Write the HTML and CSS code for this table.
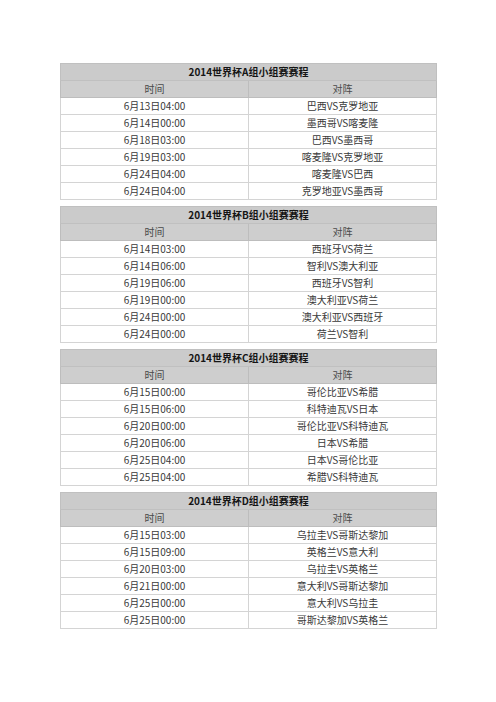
FILE: index.html
```html
<!DOCTYPE html>
<html lang="zh-CN">
<head>
<meta charset="utf-8">
<title>2014世界杯小组赛赛程</title>
<link rel="stylesheet" href="styles.css">
</head>
<body>
<div class="page">
  <table class="sched">
    <tr class="title"><td colspan="2">2014世界杯A组小组赛赛程</td></tr>
    <tr class="head"><td>时间</td><td>对阵</td></tr>
    <tr><td>6月13日04:00</td><td>巴西VS克罗地亚</td></tr>
    <tr><td>6月14日00:00</td><td>墨西哥VS喀麦隆</td></tr>
    <tr><td>6月18日03:00</td><td>巴西VS墨西哥</td></tr>
    <tr><td>6月19日03:00</td><td>喀麦隆VS克罗地亚</td></tr>
    <tr><td>6月24日04:00</td><td>喀麦隆VS巴西</td></tr>
    <tr><td>6月24日04:00</td><td>克罗地亚VS墨西哥</td></tr>
  </table>
  <table class="sched">
    <tr class="title"><td colspan="2">2014世界杯B组小组赛赛程</td></tr>
    <tr class="head"><td>时间</td><td>对阵</td></tr>
    <tr><td>6月14日03:00</td><td>西班牙VS荷兰</td></tr>
    <tr><td>6月14日06:00</td><td>智利VS澳大利亚</td></tr>
    <tr><td>6月19日06:00</td><td>西班牙VS智利</td></tr>
    <tr><td>6月19日00:00</td><td>澳大利亚VS荷兰</td></tr>
    <tr><td>6月24日00:00</td><td>澳大利亚VS西班牙</td></tr>
    <tr><td>6月24日00:00</td><td>荷兰VS智利</td></tr>
  </table>
  <table class="sched">
    <tr class="title"><td colspan="2">2014世界杯C组小组赛赛程</td></tr>
    <tr class="head"><td>时间</td><td>对阵</td></tr>
    <tr><td>6月15日00:00</td><td>哥伦比亚VS希腊</td></tr>
    <tr><td>6月15日06:00</td><td>科特迪瓦VS日本</td></tr>
    <tr><td>6月20日00:00</td><td>哥伦比亚VS科特迪瓦</td></tr>
    <tr><td>6月20日06:00</td><td>日本VS希腊</td></tr>
    <tr><td>6月25日04:00</td><td>日本VS哥伦比亚</td></tr>
    <tr><td>6月25日04:00</td><td>希腊VS科特迪瓦</td></tr>
  </table>
  <table class="sched">
    <tr class="title"><td colspan="2">2014世界杯D组小组赛赛程</td></tr>
    <tr class="head"><td>时间</td><td>对阵</td></tr>
    <tr><td>6月15日03:00</td><td>乌拉圭VS哥斯达黎加</td></tr>
    <tr><td>6月15日09:00</td><td>英格兰VS意大利</td></tr>
    <tr><td>6月20日03:00</td><td>乌拉圭VS英格兰</td></tr>
    <tr><td>6月21日00:00</td><td>意大利VS哥斯达黎加</td></tr>
    <tr><td>6月25日00:00</td><td>意大利VS乌拉圭</td></tr>
    <tr><td>6月25日00:00</td><td>哥斯达黎加VS英格兰</td></tr>
  </table>
</div>
</body>
</html>
```
FILE: styles.css
```css
html, body {
  margin: 0;
  padding: 0;
  background: #ffffff;
}
.page {
  display: flex;
  flex-direction: column;
  gap: 6px;
  padding: 63px 0 0 60px;
  font-family: "Noto Sans CJK SC", "Noto Sans", sans-serif;
}
.sched {
  width: 377px;
  border-collapse: collapse;
  table-layout: fixed;
  font-size: 10px;
  color: #3a3a3a;
}
.sched td {
  height: 16px;
  padding: 0;
  line-height: 16px;
  text-align: center;
  border: 1px solid #d4d4d4;
  width: 50%;
  white-space: nowrap;
}
.sched tr.title td {
  background: #cbcbcb;
  color: #151515;
  font-weight: 700;
  border-color: #c0c0c0;
}
.sched tr.head td {
  background: #cecece;
  color: #4a4a4a;
  border-color: #bdbdbd;
}
.sched td:nth-child(2) {
  border-left-color: #b8b8b8;
}
```
